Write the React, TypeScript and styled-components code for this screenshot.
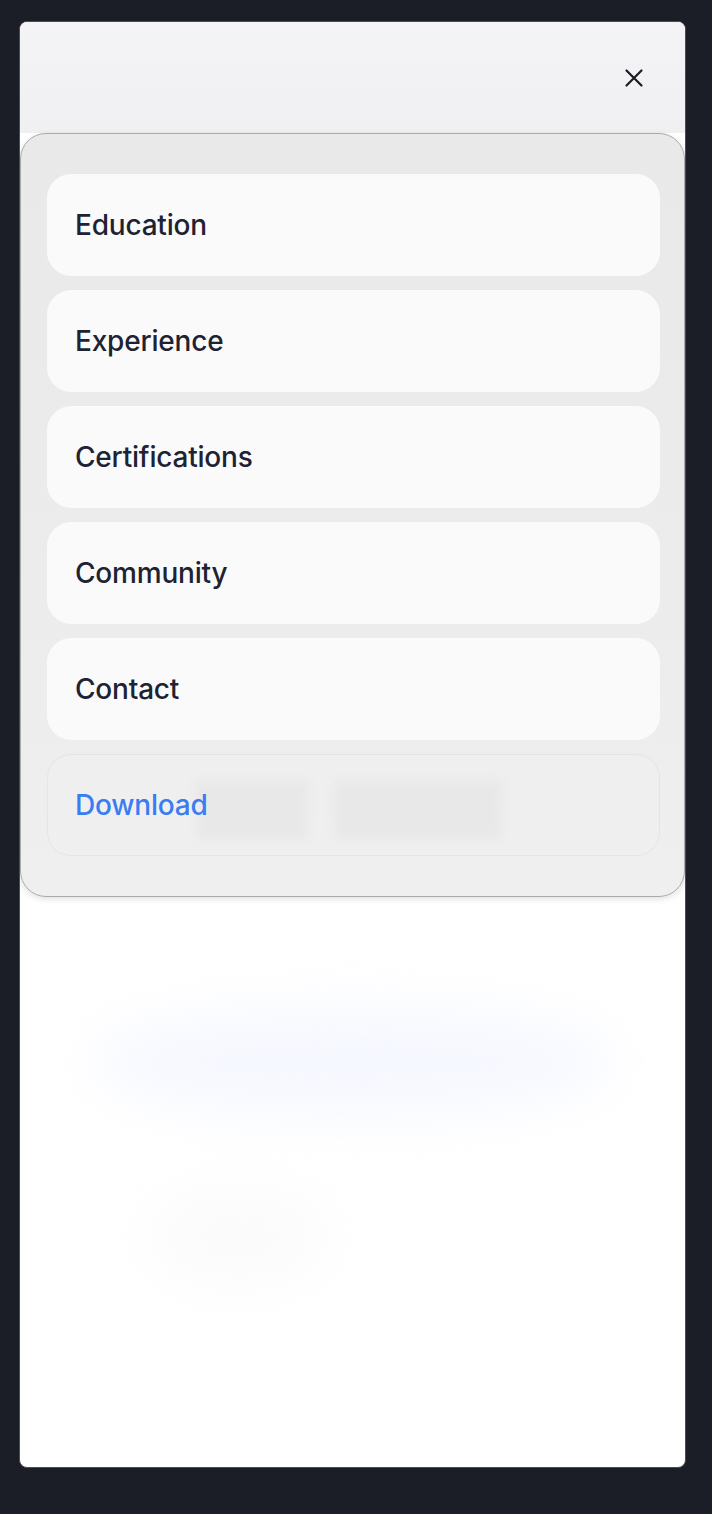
import React from 'react';
import styled, { createGlobalStyle } from 'styled-components';

const GlobalStyle = createGlobalStyle`
    html, body {
        margin: 0;
        padding: 0;
        background: #1b1e26;
    }
    body {
        font-family: Inter, "Noto Sans", "Liberation Sans", sans-serif;
        -webkit-font-smoothing: antialiased;
    }
`;

const Page = styled.div`
    min-height: 1514px;
    box-sizing: border-box;
    padding: 21px 26px 0 19px;
    background: #1b1e26;
`;

const Frame = styled.div`
    width: 667px;
    height: 1447px;
    box-sizing: border-box;
    border: 1px solid #4a4d55;
    border-radius: 8px;
    background: #ffffff;
    overflow: hidden;
    display: flex;
    flex-direction: column;
`;

const Header = styled.div`
    height: 111px;
    flex-shrink: 0;
    display: flex;
    align-items: center;
    justify-content: flex-end;
    padding: 0 36px 0 0;
    background: linear-gradient(180deg, #f4f4f6 0%, #f0f0f2 100%);
`;

const CloseButton = styled.button`
    width: 30px;
    height: 30px;
    border: none;
    background: transparent;
    padding: 0;
    display: flex;
    align-items: center;
    justify-content: center;
    cursor: pointer;
    color: #1a1d26;
    margin-top: 1px;
`;

const Panel = styled.nav`
    flex-shrink: 0;
    box-sizing: border-box;
    display: flex;
    flex-direction: column;
    gap: 14px;
    padding: 40px 24px 40px 26px;
    border: 1px solid #a9a9a9;
    border-radius: 26px;
    background: linear-gradient(180deg, #e9e9e9 0%, #ececec 60%, #efefef 100%);
    box-shadow: 0 2px 6px rgba(0, 0, 0, 0.12);
    position: relative;
    z-index: 1;
`;

const MenuItem = styled.a<{ $accent?: boolean }>`
    height: 102px;
    box-sizing: border-box;
    display: flex;
    align-items: center;
    padding: 0 27px;
    border-radius: 24px;
    font-size: 28px;
    font-weight: 500;
    letter-spacing: -0.2px;
    text-decoration: none;
    color: ${(p) => (p.$accent ? '#3a7cf2' : '#1e2333')};
    background: ${(p) => (p.$accent ? 'rgba(240, 240, 240, 0.6)' : '#fafafa')};
    border: 1px solid ${(p) => (p.$accent ? 'rgba(225, 225, 225, 0.7)' : '#fafafa')};
    position: relative;
    overflow: hidden;
`;

const Label = styled.span`
    position: relative;
    z-index: 1;
`;

// blurred page content showing through the translucent download row
const Ghosts = styled.span`
    position: absolute;
    left: 148px;
    top: 26px;
    display: flex;
    gap: 26px;
`;

const GhostBlock = styled.span<{ $w: number }>`
    display: block;
    width: ${(p) => p.$w}px;
    height: 58px;
    background: #e8e8e8;
    filter: blur(5px);
`;

const Below = styled.div`
    flex: 1;
    display: flex;
    flex-direction: column;
    align-items: center;
    padding-top: 110px;
    gap: 70px;
`;

const Blob = styled.div<{ $w: number; $h: number; $color: string; $shift: number }>`
    width: ${(p) => p.$w}px;
    height: ${(p) => p.$h}px;
    border-radius: 50%;
    background: ${(p) => p.$color};
    filter: blur(26px);
    margin-left: ${(p) => p.$shift}px;
`;

const items = ['Education', 'Experience', 'Certifications', 'Community', 'Contact'];

const CloseIcon = () => (
    <svg width="20" height="20" viewBox="0 0 20 20" fill="none">
        <path d="M2.5 2.5 17.5 17.5M17.5 2.5 2.5 17.5" stroke="currentColor" strokeWidth="2.2" strokeLinecap="round" />
    </svg>
);

const App: React.FC = () => {
    return (
        <>
            <GlobalStyle />
            <Page>
                <Frame>
                    <Header>
                        <CloseButton aria-label="Close menu">
                            <CloseIcon />
                        </CloseButton>
                    </Header>
                    <Panel>
                        {items.map((label) => (
                            <MenuItem key={label} href="#">
                                {label}
                            </MenuItem>
                        ))}
                        <MenuItem href="#" $accent>
                            <Ghosts>
                                <GhostBlock $w={112} />
                                <GhostBlock $w={168} />
                            </Ghosts>
                            <Label>Download</Label>
                        </MenuItem>
                    </Panel>
                    <Below>
                        <Blob $w={520} $h={110} $color="#f6f8ff" $shift={0} />
                        <Blob $w={180} $h={100} $color="#fbfbfb" $shift={-230} />
                    </Below>
                </Frame>
            </Page>
        </>
    );
};

export default App;
